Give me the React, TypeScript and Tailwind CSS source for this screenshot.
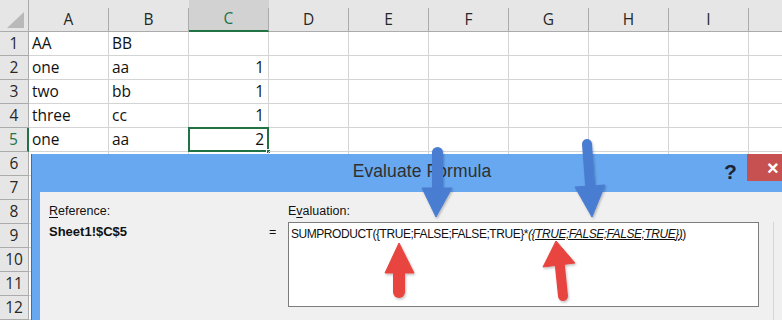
import React from 'react';

const COLS = ['A', 'B', 'C', 'D', 'E', 'F', 'G', 'H', 'I'];

const ROWS: { a?: string; b?: string; c?: number }[] = [
  { a: 'AA', b: 'BB' },
  { a: 'one', b: 'aa', c: 1 },
  { a: 'two', b: 'bb', c: 1 },
  { a: 'three', b: 'cc', c: 1 },
  { a: 'one', b: 'aa', c: 2 },
  {}, {}, {}, {}, {}, {}, {},
];

function HeaderRow() {
  return (
    <div className="flex h-[32px] bg-[#e6e6e6] border-b border-[#ababab]">
      {/* corner with the select-all triangle */}
      <div className="w-[29px] shrink-0 flex items-end justify-end pr-[3px] pb-[2px] border-r border-[#ababab]">
        <svg width="18" height="17" viewBox="0 0 18 17">
          <polygon points="17,0 17,16 0,16" fill="#b9b9b9" />
        </svg>
      </div>
      {COLS.map((c) => (
        <div
          key={c}
          className={`w-[80px] shrink-0 flex flex-col ${c === 'C' ? 'bg-[#d2d2d2]' : ''}`}
        >
          <div className="h-[8px]" />
          <div
            className={`flex-1 flex items-center justify-center border-r border-[#ababab] text-[15.5px] leading-none ${
              c === 'C' ? 'text-[#217346] border-b-2 border-b-[#217346] -mb-px' : 'text-[#262626]'
            }`}
          >
            {c}
          </div>
        </div>
      ))}
      <div className="flex-1" />
    </div>
  );
}

function DataRow({ idx, row }: { idx: number; row: { a?: string; b?: string; c?: number } }) {
  const selected = idx === 5;
  return (
    <div className="flex h-[24px]">
      <div
        className={`w-[29px] shrink-0 flex items-center justify-center bg-[#e6e6e6] border-b text-[15.5px] leading-none ${
          selected
            ? 'border-r-2 border-r-[#217346] text-[#217346] border-b-[#ababab]'
            : 'border-r border-[#ababab] text-[#262626]'
        }`}
      >
        {idx}
      </div>
      {COLS.map((c) => (
        <div
          key={c}
          className={`relative w-[80px] shrink-0 flex items-center border-r border-b border-[#d4d4d4] text-[15.5px] text-[#111] leading-none ${
            c === 'C' ? 'justify-end pr-[4px]' : 'pl-[3px]'
          }`}
        >
          {c === 'A' && row.a}
          {c === 'B' && row.b}
          {c === 'C' && row.c}
          {c === 'C' && selected && (
            <>
              <div className="absolute left-[-1px] top-[-1px] right-[-1px] bottom-[-1px] border-2 border-[#217346]" />
              <div className="absolute right-[-3px] bottom-[-3px] w-[5px] h-[5px] bg-[#217346] border border-white" />
            </>
          )}
        </div>
      ))}
      <div className="flex-1 border-b border-[#d4d4d4]" />
    </div>
  );
}

function EvaluateDialog() {
  return (
    <div className="absolute left-[31px] top-[154px] w-[781px] h-[200px] flex flex-col bg-[#67a8f0] border-l border-[#4f6a8a] font-['Liberation_Sans',sans-serif]">
      {/* title bar */}
      <div className="relative h-[38px] flex items-center justify-center">
        <span className="text-[17.5px] text-[#2f2f2f] tracking-[0.1px] -mt-[3px]">Evaluate Formula</span>
        <span className="absolute left-[692px] top-[2px] text-[21px] font-bold text-[#1c2533]">?</span>
        <div className="absolute left-[715px] top-0 w-[50px] h-[27px] bg-[#c75050] flex items-center justify-start pl-[20px]">
          <span className="text-white text-[20px] font-bold leading-none">×</span>
        </div>
      </div>

      {/* body */}
      <div className="flex-1 ml-[8px] bg-[#f0f0f0] flex pt-[11px] pl-[9px] text-[12.5px] text-[#111]">
        <div className="w-[220px] flex flex-col">
          <span className="leading-[16px]">
            <span className="underline underline-offset-2">R</span>eference:
          </span>
          <span className="mt-[5px] leading-[16px] font-bold text-[13px]">Sheet1!$C$5</span>
        </div>
        <div className="w-[19px] pt-[21px] leading-[16px]">=</div>
        <div className="w-[471px] flex flex-col">
          <span className="leading-[16px]">
            E<span className="underline underline-offset-2">v</span>aluation:
          </span>
          <div className="mt-[3px] h-[85px] bg-white border border-[#7d7d7d] pl-[2px] pt-[3px] text-[12px] tracking-[-0.45px] leading-[16px] text-[#111] whitespace-nowrap">
            SUMPRODUCT({'{'}TRUE;FALSE;FALSE;TRUE{'}'}*
            <span className="italic underline underline-offset-1">({'{'}TRUE;FALSE;FALSE;TRUE{'}'})</span>)
          </div>
        </div>
        <div className="ml-[14px] mt-[19px] border-l border-[#d6d6d6]" />
      </div>
    </div>
  );
}

function Arrows() {
  return (
    <svg className="absolute inset-0 pointer-events-none" width="782" height="320" viewBox="0 0 782 320">
      <defs>
        <filter id="sh" x="-50%" y="-50%" width="200%" height="200%">
          <feDropShadow dx="1" dy="1.5" stdDeviation="1.2" floodColor="#000" floodOpacity="0.25" />
        </filter>
      </defs>
      <g filter="url(#sh)" fill="#4a7dd1" stroke="#4a7dd1">
        <line x1="437.5" y1="152.5" x2="437.5" y2="192" strokeWidth="11" strokeLinecap="round" />
        <polygon points="422,188 452,188 436,217" strokeWidth="1" strokeLinejoin="round" />
        <line x1="587" y1="144" x2="590.5" y2="190" strokeWidth="10" strokeLinecap="round" />
        <polygon points="575,187 605,185 592,217" strokeWidth="1" strokeLinejoin="round" />
      </g>
      <g filter="url(#sh)" fill="#e8443f" stroke="#e8443f">
        <polygon points="399,243 385,273 414,273" strokeWidth="1" strokeLinejoin="round" />
        <line x1="399" y1="270" x2="399" y2="292" strokeWidth="12" strokeLinecap="round" />
        <polygon points="556,241 543,267 575,263" strokeWidth="1" strokeLinejoin="round" />
        <line x1="559.5" y1="262" x2="563" y2="296" strokeWidth="10" strokeLinecap="round" />
      </g>
    </svg>
  );
}

export default function App() {
  return (
    <div className="relative w-[782px] h-[320px] overflow-hidden bg-white font-['Open_Sans',sans-serif]">
      <HeaderRow />
      {ROWS.map((row, i) => (
        <DataRow key={i} idx={i + 1} row={row} />
      ))}
      <EvaluateDialog />
      <Arrows />
    </div>
  );
}
